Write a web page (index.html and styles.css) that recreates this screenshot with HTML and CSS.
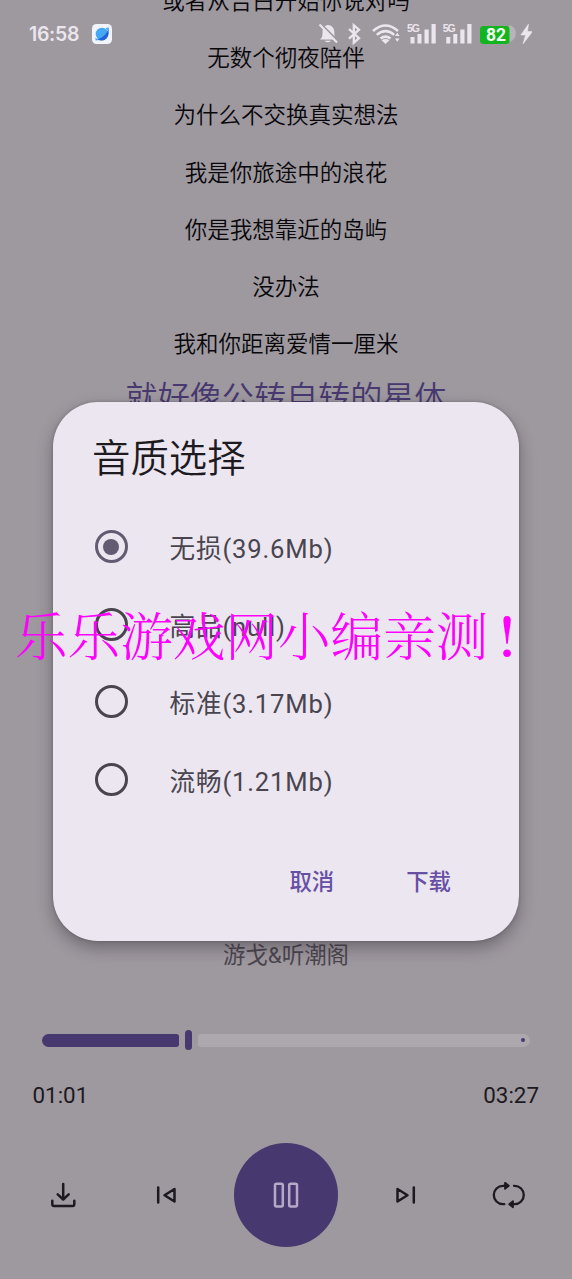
FILE: index.html
```html
<!DOCTYPE html>
<html lang="zh-CN">
<head>
<meta charset="utf-8">
<title>音质选择</title>
<link rel="stylesheet" href="styles.css">
</head>
<body>
<div class="screen">
  <main class="player">
    <div class="lyrics">
      <p class="line">或者从告白开始你说对吗</p>
      <p class="line">无数个彻夜陪伴</p>
      <p class="line">为什么不交换真实想法</p>
      <p class="line">我是你旅途中的浪花</p>
      <p class="line">你是我想靠近的岛屿</p>
      <p class="line">没办法</p>
      <p class="line">我和你距离爱情一厘米</p>
      <p class="line active">就好像公转自转的星体</p>
    </div>
    <p class="artist">游戈&amp;听潮阁</p>
    <div class="slider">
      <span class="played"></span><span class="thumb"></span><span class="rest"><i class="stop"></i></span>
    </div>
    <div class="times"><span>01:01</span><span>03:27</span></div>
    <div class="controls">
      <svg class="icon" viewBox="0 0 40 40"><path d="M20.200 9v15M14.700 19.300l5.500 5.200 5.500-5.200M9.300 25.800v3.500q0 1.800 1.800 1.800h18.400q1.800 0 1.800-1.800V25.800"/></svg>
      <svg class="icon prev" viewBox="0 0 40 40"><path d="M12.200 12.500v15M28.500 14v12.500L18.500 20.200z"/></svg>
      <div class="pause"><svg class="icon light" viewBox="0 0 40 40"><rect x="9" y="8.800" width="7.800" height="22.600" rx="1.500"/><rect x="23.200" y="8.800" width="7.800" height="22.600" rx="1.500"/></svg></div>
      <svg class="icon next" viewBox="0 0 40 40"><path d="M27.800 12.500v15M11.500 14v12.500L21.500 20.200z"/></svg>
      <svg class="icon loop" viewBox="0 0 40 40"><path d="M18 10.800h-4a9.200 9.200 0 0 0 0 18.400h1.300M25 10.800h.6a9.200 9.200 0 0 1 0 18.400h-4.100"/><path class="tip" d="M16 7.800l3.800 3-3.800 3.100zM24 26.100L20.200 29.200l3.800 3z"/></svg>
    </div>
  </main>

  <header class="status">
    <span class="clock">16:58</span>
    <svg class="app" viewBox="0 0 20 20"><rect width="20" height="20" rx="4.500" fill="#f1f4fa"/><circle cx="10" cy="10" r="6.300" fill="#43a9f5"/><path d="M16.500 3.300C16 9 11 14.500 5 15.200c4.500 2.800 10 .8 11.300-4.300.7-2.800.3-5.800.2-7.600z" fill="#2462d8"/><path d="M13.500 4.200l3.200-1-.7 3.200zM3.300 13.500l.4 3.100 2.800-.5z" fill="#43a9f5"/></svg>
    <svg class="indicators" viewBox="0 0 216 24">
      <g fill="#ebe6ed">
        <path d="M4 17.500c2.500-2 2.500-4 2.500-7.500 0-4 2-6.500 5.500-7 4.300.5 6.300 3.500 6.300 7 0 3.500.2 5.500 2.200 7.500zM8.500 18.800h6.500q-3.200 3-6.500 0z"/>
        <path d="M79 14l2.300-3.200 2.300 3.200zM79 16.500h4.600l-2.300 3.200z"/>
        <path d="M94.500 15h4v6.500h-4zM101.500 12h4v9.500h-4zM108.500 7.500h4.200v14h-4.200zM115.500 2h4.200v19.500h-4.200z"/>
        <path d="M130.300 15h4v6.500h-4zM137.300 12h4v9.500h-4zM144.300 7.500h4.200v14h-4.200zM151.300 2h4.200v19.500h-4.200z"/>
        <path d="M212.500 2l-7.700 11h4.700l-2.500 9 9.500-12.500h-5z" stroke="#ebe6ed" stroke-width=".5"/>
      </g>
      <path d="M4.500 1.500l18 18" stroke="#9e989f" stroke-width="2"/>
      <path d="M3.500 2.500l17.500 18" stroke="#ebe6ed" stroke-width="2"/>
      <path d="M33.500 7l10 9.200-5.200 4.600V3.200l5.200 4.500-10 9" transform="translate(-.5 0)" fill="none" stroke="#ebe6ed" stroke-width="2.300"/>
      <g fill="none" stroke="#ebe6ed" stroke-width="2.500"><path d="M57 9q12.500-11 25 0M60.800 12.900q8.700-7.600 17.400 0M64.500 16.600q5-4 10 0"/></g>
      <path d="M65.500 18.300q4-2.600 8 0l-4 3.700z" fill="#ebe6ed"/>
      <text x="91" y="9.500" class="g5">5G</text><text x="126.700" y="9.500" class="g5">5G</text>
      <path d="M193 3.500h2q4.800 2.500 4.800 8t-4.800 8h-2z" fill="#b8b2ba"/>
      <rect x="164" y="4" width="29.500" height="18" rx="3.500" fill="#12b51d"/>
      <text x="180" y="19" text-anchor="middle" class="battery">82</text>
    </svg>
  </header>

  <section class="dialog">
    <h1>音质选择</h1>
    <ul class="options">
      <li><span class="radio checked"></span>无损(39.6Mb)</li>
      <li><span class="radio"></span>高品(null)</li>
      <li><span class="radio"></span>标准(3.17Mb)</li>
      <li><span class="radio"></span>流畅(1.21Mb)</li>
    </ul>
    <div class="actions"><span>取消</span><span>下载</span></div>
  </section>

  <div class="watermark">乐乐游戏网小编亲测<span class="mark">!</span></div>
</div>
</body>
</html>
```
FILE: styles.css
```css
* { box-sizing: border-box; }
body, p, h1, ul { margin: 0; padding: 0; }
body { font-family: Roboto, "Noto Sans CJK SC", sans-serif; background: #9e989f; }
.screen { position: relative; width: 572px; height: 1279px; overflow: hidden; background: #9e989f; }
.player { display: flex; flex-direction: column; height: 1279px; }
.lyrics { height: 937px; margin-top: -27px; flex: none; text-align: center; color: #08070a; }
.line { font-size: 22.5px; line-height: 57.2px; font-weight: 350; white-space: nowrap; }
.line.active { font-size: 32.1px; line-height: 50px; color: #47386f; }
.artist { height: 88px; padding-top: 30px; font-size: 22.4px; line-height: 30px; text-align: center; color: #4a464e; }
.slider { display: flex; align-items: center; height: 20px; margin: 32px 42px 0; flex: none; }
.played { width: 137px; height: 13px; border-radius: 7px 3px 3px 7px; background: #47386f; }
.thumb { width: 7px; height: 20px; margin: 0 6px; border-radius: 4px; background: #47386f; }
.rest { display: flex; align-items: center; justify-content: flex-end; flex: 1; height: 13px; padding-right: 5px; border-radius: 3px 7px 7px 3px; background: #ada8ae; }
.stop { width: 4px; height: 4px; border-radius: 50%; background: #47386f; }
.times { display: flex; justify-content: space-between; margin-top: 30px; padding: 0 33px 0 32.5px; font-size: 22.4px; line-height: 30px; color: #1c1a20; }
.controls { display: flex; align-items: center; justify-content: space-between; height: 104px; margin-top: 33px; padding: 0 43px; flex: none; }
.icon { width: 40px; height: 40px; fill: none; stroke: #1c1a20; stroke-width: 2.5; stroke-linecap: round; stroke-linejoin: round; }
.prev { margin: 0 -7px 0 7px; }
.next { margin: 0 8px 0 -8px; }
.pause { display: flex; align-items: center; justify-content: center; width: 104px; height: 104px; border-radius: 50%; background: #47386f; }
.light { stroke: #b6a9c7; }
.loop { stroke-width: 2.3; }
.tip { fill: #1c1a20; stroke-width: 1.8; }
.status { position: absolute; left: 0; top: 22px; width: 572px; height: 24px; display: flex; align-items: center; padding-left: 29px; }
.clock { width: 63px; font: 600 19.5px/24px Inter, sans-serif; letter-spacing: -.3px; color: #ebe6ed; }
.app { width: 20px; height: 20px; }
.indicators { width: 216px; height: 24px; margin-left: 204px; }
.g5 { font: 700 10.5px "Liberation Sans", sans-serif; letter-spacing: -1px; fill: #ebe6ed; }
.battery { font: 700 17.5px Roboto, sans-serif; fill: #f1fff1; }
.dialog { position: absolute; left: 53px; top: 402px; width: 466px; height: 539px; padding: 31px 39px 0; border-radius: 45px; background: #ece6f0; box-shadow: 0 7px 16px rgba(40, 34, 46, .4), 0 0 3px rgba(40, 34, 46, .3); }
.dialog h1 { font-size: 38.4px; line-height: 51px; font-weight: 350; color: #1d1b20; }
.options { list-style: none; margin-top: 24px; }
.options li { display: flex; align-items: center; height: 77.6px; font-size: 25.6px; letter-spacing: .85px; color: #49454f; }
.radio { display: flex; width: 33px; height: 33px; margin: 0 42px 0 2.5px; border: 3.2px solid #49454f; border-radius: 50%; align-items: center; justify-content: center; }
.checked { border-color: #625b71; }
.checked::before { content: ""; width: 16px; height: 16px; border-radius: 50%; background: #625b71; }
.actions { display: flex; justify-content: flex-end; gap: 72px; padding-right: 29px; margin-top: 49px; font-size: 22.4px; line-height: 30px; font-weight: 500; color: #6750a4; }
.watermark { position: absolute; left: 15px; top: 593px; font: 300 52.6px/80px "Noto Serif CJK SC", FangSong, "Noto Sans CJK SC", serif; white-space: nowrap; color: #ff00ff; }
.mark { margin-left: 10px; font-weight: 600; }
```
